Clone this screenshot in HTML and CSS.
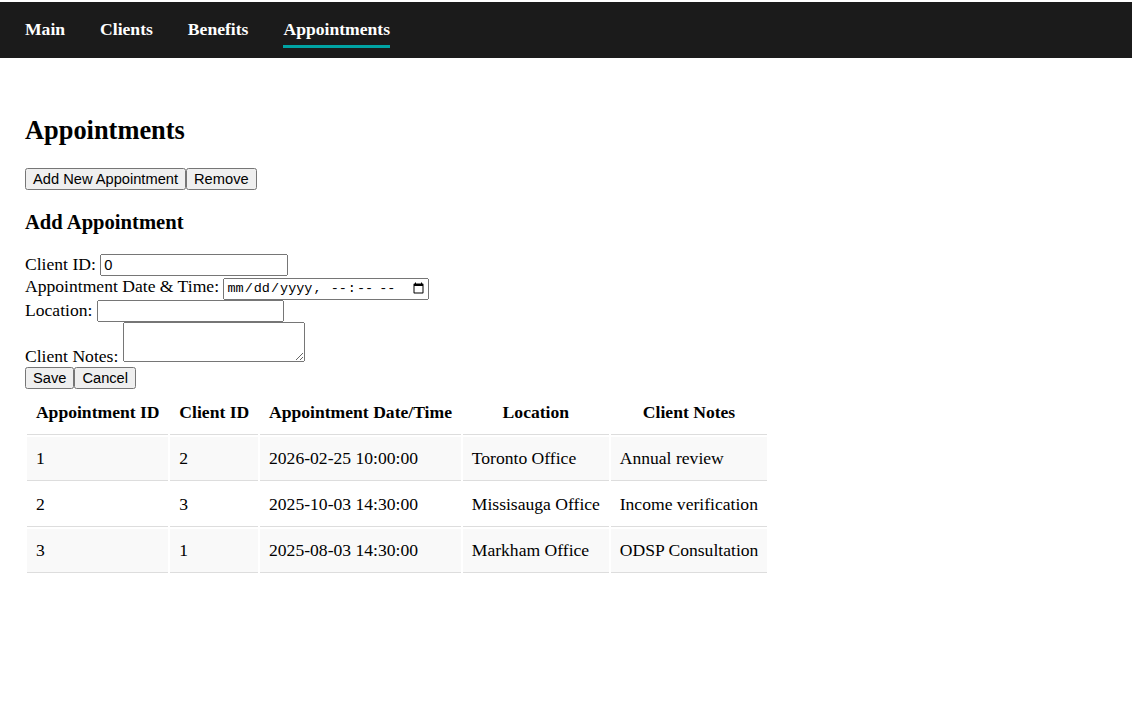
FILE: index.html
```html
<!DOCTYPE html>
<html lang="en">
<head>
<meta charset="utf-8">
<title>Appointments</title>
<link rel="stylesheet" href="styles.css">
</head>
<body>
<nav class="topnav">
  <a class="navlink" href="#">Main</a>
  <a class="navlink" href="#">Clients</a>
  <a class="navlink" href="#">Benefits</a>
  <a class="navlink active" href="#">Appointments</a>
</nav>
<main class="content">
  <h2 class="page-title">Appointments</h2>
  <div class="actions"><button class="btn">Add New Appointment</button><button class="btn">Remove</button></div>
  <h3 class="form-title">Add Appointment</h3>
  <form class="appt-form">
    <label>Client ID: <input class="field field-id" type="number" value="0"></label><br>
    <label>Appointment Date &amp; Time: <input class="field field-date" type="datetime-local"></label><br>
    <label>Location: <input class="field field-loc" type="text"></label><br>
    <label>Client Notes: <textarea class="field field-notes"></textarea></label><br>
    <button class="btn" type="button">Save</button><button class="btn" type="button">Cancel</button>
  </form>
  <table class="appt-table">
    <thead>
      <tr><th>Appointment ID</th><th>Client ID</th><th>Appointment Date/Time</th><th>Location</th><th>Client Notes</th></tr>
    </thead>
    <tbody>
      <tr><td>1</td><td>2</td><td>2026-02-25 10:00:00</td><td>Toronto Office</td><td>Annual review</td></tr>
      <tr><td>2</td><td>3</td><td>2025-10-03 14:30:00</td><td>Missisauga Office</td><td>Income verification</td></tr>
      <tr><td>3</td><td>1</td><td>2025-08-03 14:30:00</td><td>Markham Office</td><td>ODSP Consultation</td></tr>
    </tbody>
  </table>
</main>
</body>
</html>
```
FILE: styles.css
```css
html, body {
  margin: 0;
  padding: 0;
  background: #ffffff;
}
body {
  font-family: "Liberation Serif", "Times New Roman", serif;
  font-size: 17.6px;
  color: #000000;
  padding-top: 2px;
}
.topnav {
  background: #1b1b1b;
  height: 56px;
  display: flex;
  align-items: flex-start;
  gap: 35px;
  padding: 0 25px;
  box-sizing: border-box;
}
.navlink {
  color: #ffffff;
  font-weight: bold;
  text-decoration: none;
  margin-top: 17px;
  padding-bottom: 5px;
  border-bottom: 3px solid transparent;
}
.navlink.active {
  border-bottom-color: #00a3a3;
}
.content {
  padding: 35px 25px 20px;
}
.page-title {
  font-size: 26.4px;
  margin: 22px 0;
}
.form-title {
  font-size: 20.6px;
  margin: 20.6px 0;
}
.btn, .field {
  font-family: "Liberation Sans", Arial, sans-serif;
  font-size: 14.67px;
}
.field {
  box-sizing: border-box;
  height: 22px;
}
.field-id {
  width: 188px;
}
.field-date {
  width: 206px;
  font-size: 13.5px;
}
.field-loc {
  width: 187px;
}
.field-date,
.field-notes {
  font-family: "Liberation Mono", monospace;
}
.field-notes {
  width: 182px;
  height: 40px;
}
.appt-table {
  border-spacing: 2px;
}
.appt-table th,
.appt-table td {
  padding: 11px 8.9px;
  border-bottom: 1px solid #dddddd;
}
.appt-table td {
  text-align: left;
}
.appt-table tbody tr:nth-child(odd) td {
  background: #f9f9f9;
}
```
